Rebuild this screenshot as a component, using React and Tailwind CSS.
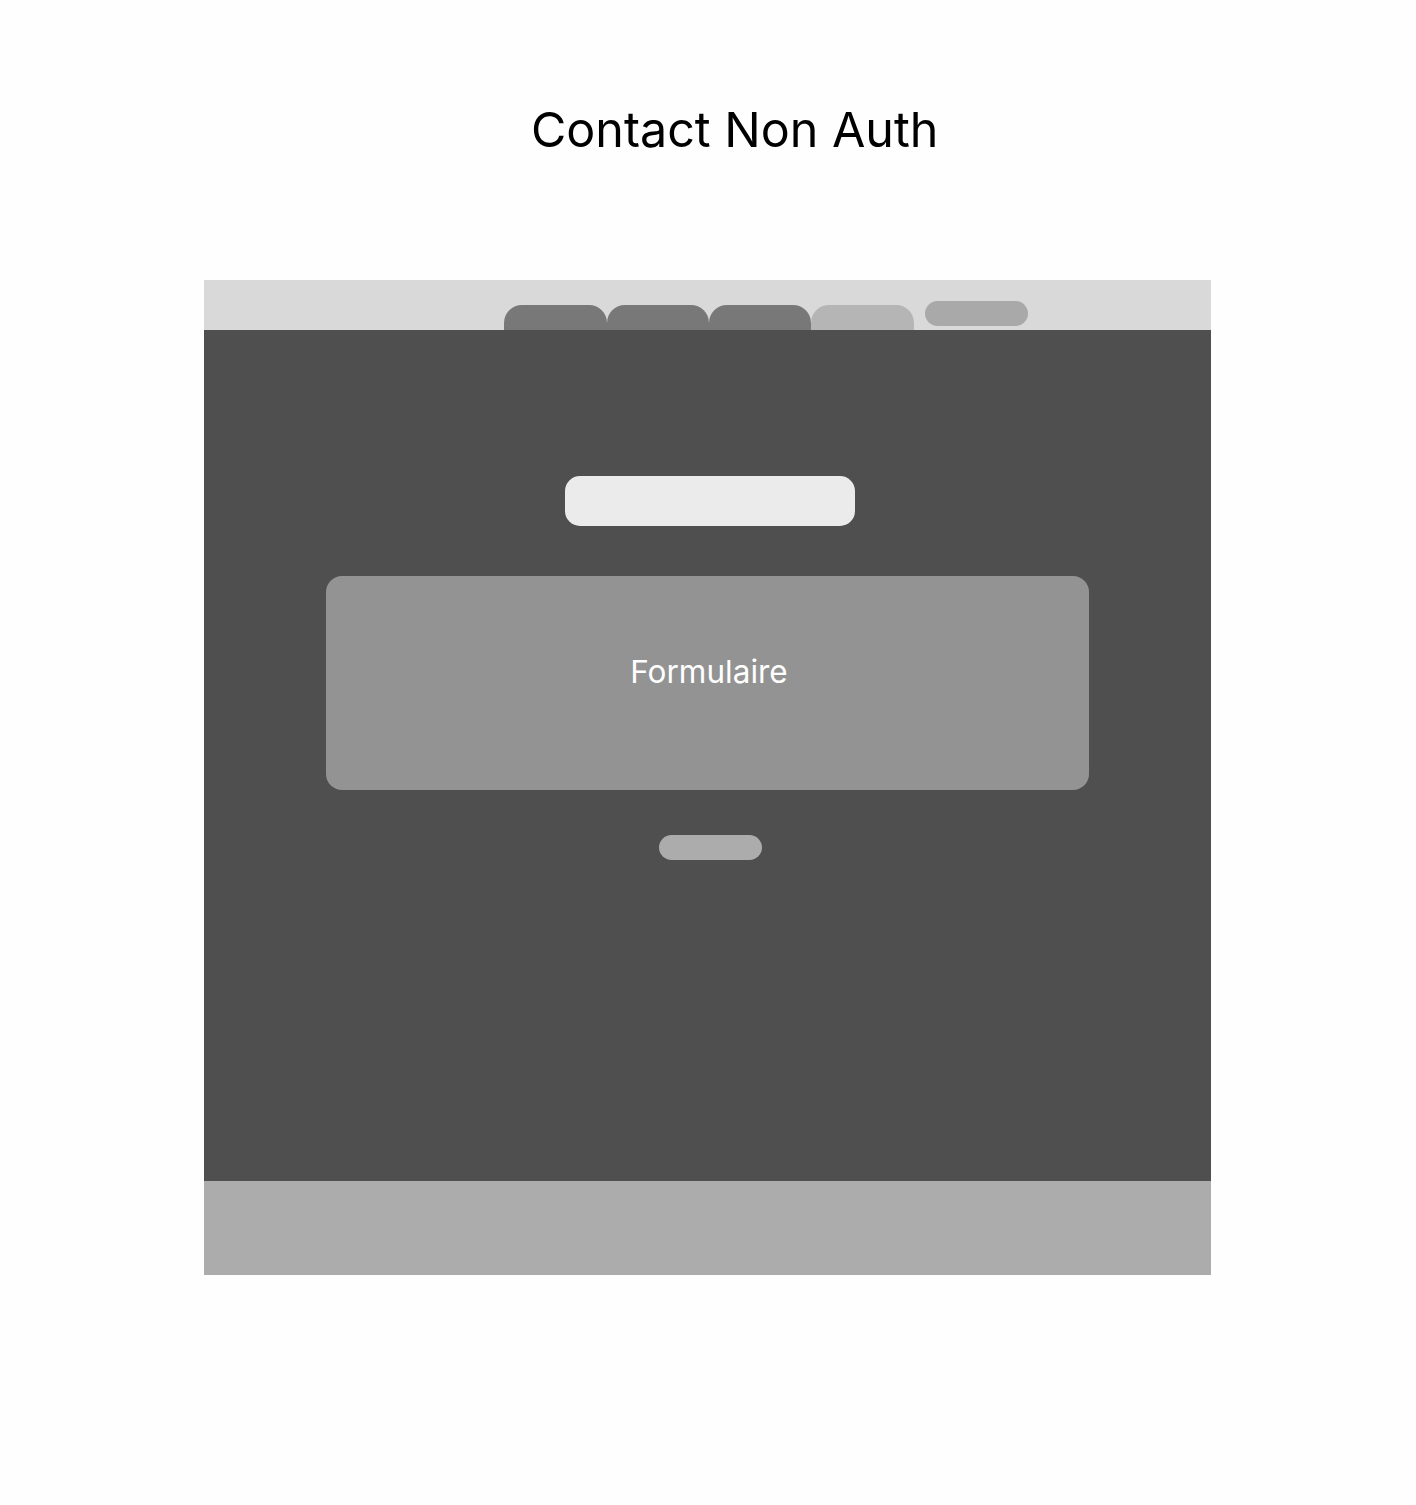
export default function App() {
  return (
    <div className="w-[1416px] h-[1505px] bg-[#fefefe] font-['Inter',_'Noto_Sans',_sans-serif] overflow-hidden">
      <div className="pt-[106px] pl-[531px]">
        <h1 className="text-[48.4px] leading-[48px] text-black font-normal whitespace-nowrap">Contact Non Auth</h1>
      </div>
      <div className="mt-[126px] ml-[204px] w-[1007px] flex flex-col">
        <div className="h-[50px] bg-[#d9d9d9] flex items-start pl-[300px]">
          <div className="mt-[25px] w-[103px] h-[25px] rounded-t-[18px] bg-[#787878]" />
          <div className="mt-[25px] w-[102px] h-[25px] rounded-t-[18px] bg-[#787878]" />
          <div className="mt-[25px] w-[102px] h-[25px] rounded-t-[18px] bg-[#787878]" />
          <div className="mt-[25px] w-[103px] h-[25px] rounded-t-[18px] bg-[#b5b5b5]" />
          <div className="mt-[21px] ml-[11px] w-[103px] h-[25px] rounded-full bg-[#a9a9a9]" />
        </div>
        <div className="h-[851px] bg-[#4f4f4f] flex flex-col items-start pt-[146px]">
          <div className="ml-[361px] w-[290px] h-[50px] rounded-[15px] bg-[#ebebeb]" />
          <div className="ml-[122px] mt-[50px] w-[763px] h-[214px] rounded-[16px] bg-[#939393] pt-[80px] pl-[3px] flex justify-center">
            <span className="text-[31.5px] leading-[31px] text-white">Formulaire</span>
          </div>
          <div className="ml-[455px] mt-[45px] w-[103px] h-[25px] rounded-full bg-[#acacac]" />
        </div>
        <div className="h-[94px] bg-[#acacac]" />
      </div>
    </div>
  );
}
